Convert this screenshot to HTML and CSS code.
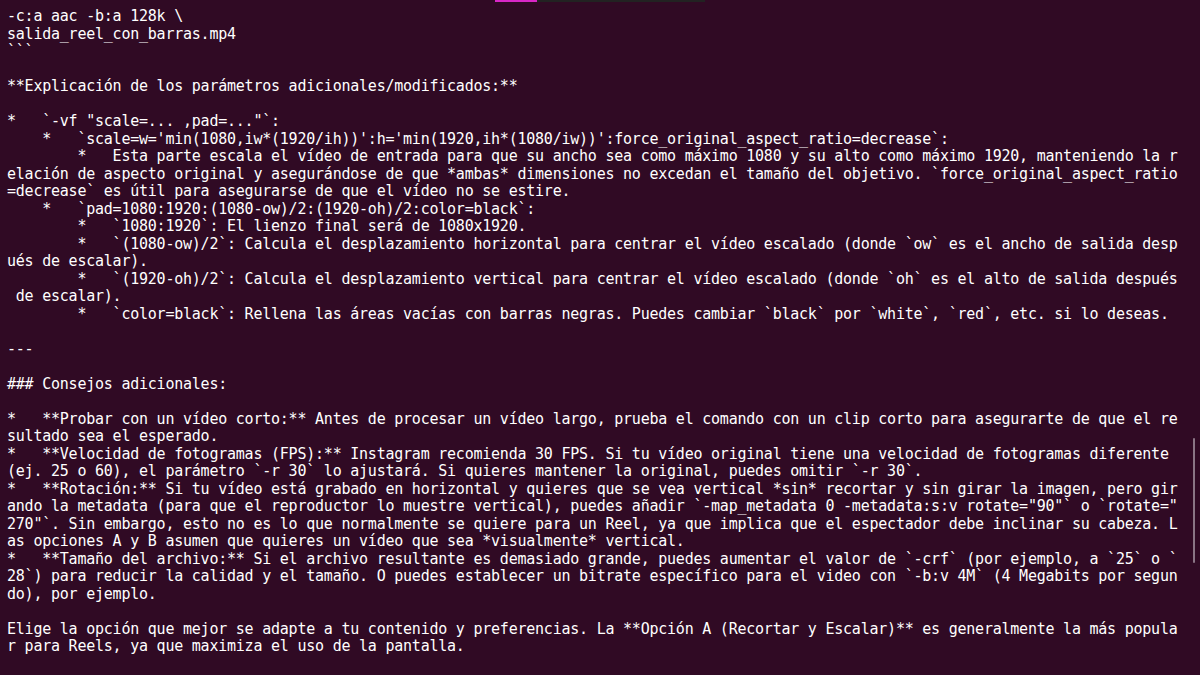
FILE: index.html
```html
<!DOCTYPE html>
<html lang="es">
<head>
<meta charset="utf-8">
<title>Terminal</title>
<link rel="stylesheet" href="styles.css">
</head>
<body>
<div class="tabbar"><span class="tab-active"></span><span class="tab-rest"></span></div>
<div class="scrollbar"></div>
<main class="term">
<div class="ln">-c:a aac -b:a 128k \</div>
<div class="ln">salida_reel_con_barras.mp4</div>
<div class="ln">```</div>
<div class="ln"></div>
<div class="ln">**Explicación de los parámetros adicionales/modificados:**</div>
<div class="ln"></div>
<div class="ln">*   `-vf "scale=... ,pad=..."`:</div>
<div class="ln">    *   `scale=w='min(1080,iw*(1920/ih))':h='min(1920,ih*(1080/iw))':force_original_aspect_ratio=decrease`:</div>
<div class="ln">        *   Esta parte escala el vídeo de entrada para que su ancho sea como máximo 1080 y su alto como máximo 1920, manteniendo la r</div>
<div class="ln">elación de aspecto original y asegurándose de que *ambas* dimensiones no excedan el tamaño del objetivo. `force_original_aspect_ratio</div>
<div class="ln">=decrease` es útil para asegurarse de que el vídeo no se estire.</div>
<div class="ln">    *   `pad=1080:1920:(1080-ow)/2:(1920-oh)/2:color=black`:</div>
<div class="ln">        *   `1080:1920`: El lienzo final será de 1080x1920.</div>
<div class="ln">        *   `(1080-ow)/2`: Calcula el desplazamiento horizontal para centrar el vídeo escalado (donde `ow` es el ancho de salida desp</div>
<div class="ln">ués de escalar).</div>
<div class="ln">        *   `(1920-oh)/2`: Calcula el desplazamiento vertical para centrar el vídeo escalado (donde `oh` es el alto de salida después</div>
<div class="ln"> de escalar).</div>
<div class="ln">        *   `color=black`: Rellena las áreas vacías con barras negras. Puedes cambiar `black` por `white`, `red`, etc. si lo deseas.</div>
<div class="ln"></div>
<div class="ln">---</div>
<div class="ln"></div>
<div class="ln">### Consejos adicionales:</div>
<div class="ln"></div>
<div class="ln">*   **Probar con un vídeo corto:** Antes de procesar un vídeo largo, prueba el comando con un clip corto para asegurarte de que el re</div>
<div class="ln">sultado sea el esperado.</div>
<div class="ln">*   **Velocidad de fotogramas (FPS):** Instagram recomienda 30 FPS. Si tu vídeo original tiene una velocidad de fotogramas diferente</div>
<div class="ln">(ej. 25 o 60), el parámetro `-r 30` lo ajustará. Si quieres mantener la original, puedes omitir `-r 30`.</div>
<div class="ln">*   **Rotación:** Si tu vídeo está grabado en horizontal y quieres que se vea vertical *sin* recortar y sin girar la imagen, pero gir</div>
<div class="ln">ando la metadata (para que el reproductor lo muestre vertical), puedes añadir `-map_metadata 0 -metadata:s:v rotate="90"` o `rotate="</div>
<div class="ln">270"`. Sin embargo, esto no es lo que normalmente se quiere para un Reel, ya que implica que el espectador debe inclinar su cabeza. L</div>
<div class="ln">as opciones A y B asumen que quieres un vídeo que sea *visualmente* vertical.</div>
<div class="ln">*   **Tamaño del archivo:** Si el archivo resultante es demasiado grande, puedes aumentar el valor de `-crf` (por ejemplo, a `25` o `</div>
<div class="ln">28`) para reducir la calidad y el tamaño. O puedes establecer un bitrate específico para el video con `-b:v 4M` (4 Megabits por segun</div>
<div class="ln">do), por ejemplo.</div>
<div class="ln"></div>
<div class="ln">Elige la opción que mejor se adapte a tu contenido y preferencias. La **Opción A (Recortar y Escalar)** es generalmente la más popula</div>
<div class="ln">r para Reels, ya que maximiza el uso de la pantalla.</div>
</main>
</body>
</html>
```
FILE: styles.css
```css
html, body {
  margin: 0;
  padding: 0;
  width: 1200px;
  height: 675px;
  overflow: hidden;
  background: #300a24;
}

body {
  position: relative;
  font-family: "DejaVu Sans Mono", "Liberation Mono", monospace;
  color: #ffffff;
}

.term {
  padding: 8px 0 0 7px;
  display: flex;
  flex-direction: column;
}

.ln {
  white-space: pre;
  height: 17.5px;
  line-height: 17.5px;
  font-size: 15px;
  letter-spacing: -0.23px;
}

.tabbar {
  position: absolute;
  top: 0;
  left: 495px;
  display: flex;
  height: 2px;
}

.tab-active {
  width: 42px;
  background: #d927c6;
}

.tab-rest {
  width: 168px;
  background: #222222;
}

.scrollbar {
  position: absolute;
  top: 438px;
  left: 1193px;
  width: 2px;
  height: 125px;
  background: #8a7585;
  border-radius: 1px;
}
```
